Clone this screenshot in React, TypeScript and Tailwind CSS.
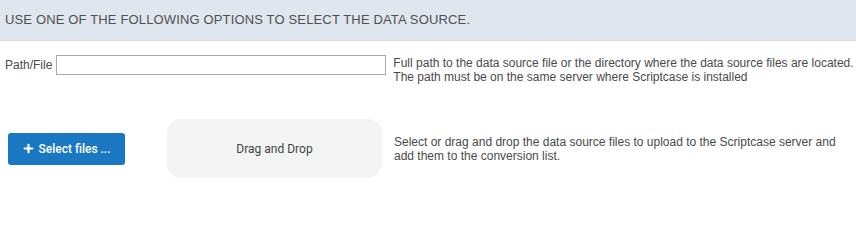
import { Plus } from "lucide-react";

export default function App() {
  return (
    <div className="w-[856px] h-[207px] bg-white font-['Liberation_Sans',Arial,sans-serif] text-[#4a4a4a]">
      <div className="h-[41px] bg-[#dfe6ee] border-b border-[#d3dbe4] flex items-center px-[5px]">
        <span className="text-[13px] tracking-[0.15px] text-[#505050]">
          USE ONE OF THE FOLLOWING OPTIONS TO SELECT THE DATA SOURCE.
        </span>
      </div>

      <div className="flex items-start pt-[13px] pl-[5px]">
        <div className="flex items-center gap-[4px] pt-[1px]">
          <span className="text-[12px]">Path/File</span>
          <input
            type="text"
            className="w-[330px] h-[20px] border border-[#a9a9a9] bg-white outline-none"
          />
        </div>
        <p className="ml-[7px] text-[12px] leading-[14px] pt-[2px]">
          Full path to the data source file or the directory where the data source files are located.
          <br />
          The path must be on the same server where Scriptcase is installed
        </p>
      </div>

      <div className="flex items-center mt-[35px] pl-[8px]">
        <button className="w-[117px] h-[32px] rounded-[3px] bg-[#1a78c2] text-white flex items-center justify-center gap-[3px] font-['Roboto',sans-serif] text-[12px] font-medium">
          <Plus size={13} strokeWidth={4} />
          Select files ...
        </button>
        <div className="ml-[42px] w-[215px] h-[59px] rounded-[14px] bg-[#f4f4f4] flex items-center justify-center font-['Roboto',sans-serif] text-[12px] text-[#444]">
          Drag and Drop
        </div>
        <p className="ml-[12px] text-[12px] leading-[14px]">
          Select or drag and drop the data source files to upload to the Scriptcase server and
          <br />
          add them to the conversion list.
        </p>
      </div>
    </div>
  );
}
